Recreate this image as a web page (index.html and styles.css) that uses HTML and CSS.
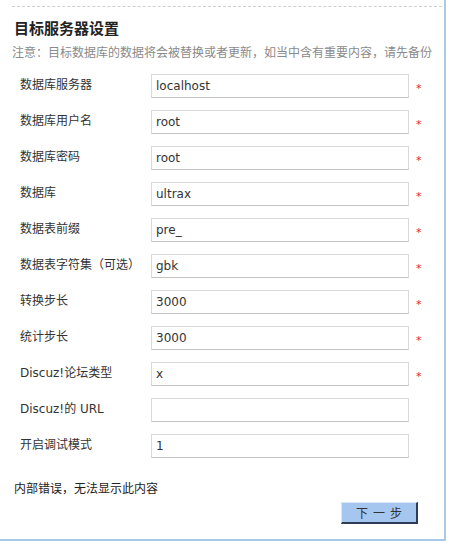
FILE: index.html
```html
<!DOCTYPE html>
<html lang="zh-CN">
<head>
    <meta charset="utf-8">
    <link rel="stylesheet" href="styles.css">
</head>
<body>
    <div class="panel">
        <div class="rule"></div>
        <h2 class="title">目标服务器设置</h2>
        <p class="note">注意：目标数据库的数据将会被替换或者更新，如当中含有重要内容，请先备份</p>

        <!-- Target server form -->
        <form class="setup-form">
            <label>数据库服务器</label>
            <input type="text" value="localhost">
            <span class="req">*</span>

            <label>数据库用户名</label>
            <input type="text" value="root">
            <span class="req">*</span>

            <label>数据库密码</label>
            <input type="text" value="root">
            <span class="req">*</span>

            <label>数据库</label>
            <input type="text" value="ultrax">
            <span class="req">*</span>

            <label>数据表前缀</label>
            <input type="text" value="pre_">
            <span class="req">*</span>

            <label>数据表字符集（可选）</label>
            <input type="text" value="gbk">
            <span class="req">*</span>

            <label>转换步长</label>
            <input type="text" value="3000">
            <span class="req">*</span>

            <label>统计步长</label>
            <input type="text" value="3000">
            <span class="req">*</span>

            <label>Discuz!论坛类型</label>
            <input type="text" value="x">
            <span class="req">*</span>

            <label>Discuz!的&nbsp;URL</label>
            <input type="text" value="">
            <span class="req"></span>

            <label>开启调试模式</label>
            <input type="text" value="1">
            <span class="req"></span>
        </form>

        <p class="error-msg">内部错误，无法显示此内容</p>
        <div class="actions">
            <button type="button" class="btn-next">下一步</button>
        </div>
    </div>
</body>
</html>
```

FILE: styles.css
```css
/* General */
body {
    margin: 0;
    padding: 0;
    background: #ffffff;
    font-family: "DejaVu Sans", "Noto Sans CJK SC", sans-serif;
    font-size: 12px;
    color: #333;
}

.panel {
    width: 446px;
    height: 541px;
    box-sizing: border-box;
    border-right: 2px solid #a9c9ea;
    border-bottom: 2px solid #a9c9ea;
    padding-top: 6px;
}

.rule {
    margin: 0 2px 0 12px;
    border-top: 1px dashed #cfcfcf;
}

.title {
    margin: 11px 0 0 14px;
    font-family: "Noto Sans CJK SC", sans-serif;
    font-size: 15px;
    line-height: 20px;
    font-weight: bold;
    color: #222;
}

.note {
    margin: 4px 0 0 12px;
    font-family: "Noto Sans CJK SC", sans-serif;
    font-size: 12px;
    line-height: 20px;
    white-space: nowrap;
    color: #8a8a8a;
}

/* Form */
.setup-form {
    display: grid;
    grid-template-columns: 131px 258px 30px;
    grid-auto-rows: 36px;
    align-items: center;
    margin-top: 6px;
    padding-left: 20px;
}

.setup-form label {
    color: #333;
    line-height: 16px;
    margin-top: -3px;
}

.setup-form input {
    height: 24px;
    box-sizing: border-box;
    margin: 0;
    padding: 0 4px;
    font-family: "DejaVu Sans", sans-serif;
    font-size: 12px;
    color: #333;
    border: 1px solid #d9d9d9;
    border-bottom-color: #c2c2c2;
    background: #fff;
    outline: none;
}

.req {
    padding: 5px 0 0 7px;
    font-size: 11px;
    color: #e0202c;
}

.error-msg {
    margin: 14px 0 0 14px;
    font-family: "Noto Sans CJK SC", sans-serif;
    line-height: 20px;
    color: #222;
}

.actions {
    display: flex;
    justify-content: flex-end;
    padding-right: 26px;
    margin-top: 4px;
}

.btn-next {
    width: 77px;
    height: 22px;
    box-sizing: border-box;
    padding: 0 0 0 5px;
    font-family: "Noto Sans CJK SC", sans-serif;
    font-size: 12px;
    letter-spacing: 5px;
    color: #333;
    background: #a4c6ef;
    border: 0;
    border-top: 1px solid #d8e6f6;
    border-left: 1px solid #d8e6f6;
    border-right: 2px solid #2e3c55;
    border-bottom: 2px solid #2e3c55;
    cursor: pointer;
}
```
